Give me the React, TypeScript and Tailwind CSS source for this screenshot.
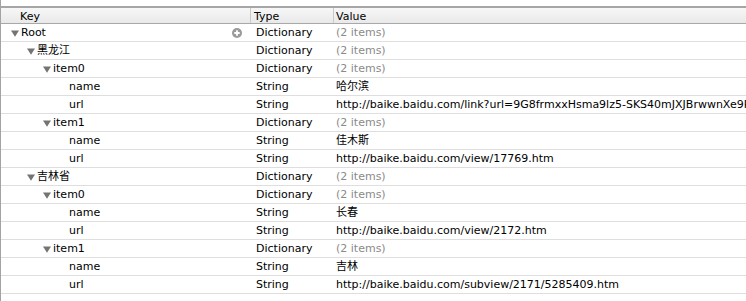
import React from "react";

type Row = {
    key: string;
    level: number;
    open?: boolean;
    type: string;
    value: string;
    muted?: boolean;
    plus?: boolean;
};

const rows: Row[] = [
    {key: "Root", level: 0, open: true, type: "Dictionary", value: "(2 items)", muted: true, plus: true},
    {key: "黑龙江", level: 1, open: true, type: "Dictionary", value: "(2 items)", muted: true},
    {key: "item0", level: 2, open: true, type: "Dictionary", value: "(2 items)", muted: true},
    {key: "name", level: 3, type: "String", value: "哈尔滨"},
    {key: "url", level: 3, type: "String", value: "http://baike.baidu.com/link?url=9G8frmxxHsma9lz5-SKS40mJXJBrwwnXe9RpqL"},
    {key: "item1", level: 2, open: true, type: "Dictionary", value: "(2 items)", muted: true},
    {key: "name", level: 3, type: "String", value: "佳木斯"},
    {key: "url", level: 3, type: "String", value: "http://baike.baidu.com/view/17769.htm"},
    {key: "吉林省", level: 1, open: true, type: "Dictionary", value: "(2 items)", muted: true},
    {key: "item0", level: 2, open: true, type: "Dictionary", value: "(2 items)", muted: true},
    {key: "name", level: 3, type: "String", value: "长春"},
    {key: "url", level: 3, type: "String", value: "http://baike.baidu.com/view/2172.htm"},
    {key: "item1", level: 2, open: true, type: "Dictionary", value: "(2 items)", muted: true},
    {key: "name", level: 3, type: "String", value: "吉林"},
    {key: "url", level: 3, type: "String", value: "http://baike.baidu.com/subview/2171/5285409.htm"},
];

const indents = ["pl-[10px]", "pl-[26px]", "pl-[42px]", "pl-[68px]"];

function Triangle() {
    return (
        <svg width="8" height="7" viewBox="0 0 8 7" className="mr-[2px] shrink-0">
            <path d="M0 0.5h8L4 6.8z" fill="#747474" />
        </svg>
    );
}

function PlusButton() {
    return (
        <svg width="10" height="10" viewBox="0 0 10 10" className="mr-[8px]">
            <circle cx="5" cy="5" r="5" fill="#9a9a9a" />
            <path d="M5 2.3v5.4M2.3 5h5.4" stroke="#fff" strokeWidth="1.8" />
        </svg>
    );
}

export default function App() {
    return (
        <div className="w-[746px] h-[301px] overflow-hidden bg-white border-l border-[#a3a3a3] text-[11px] text-black font-['DejaVu_Sans','Noto_Sans_CJK_SC',sans-serif]">
            <div className="h-[6px] bg-white" />
            <div className="border-t-2 border-[#a6a6a6] border-b border-b-[#a8a8a8] h-[18px] flex items-center bg-gradient-to-b from-[#f7f7f7] to-[#e9e9e9]">
                <div className="w-[249px] pl-[19px] pt-px leading-none">Key</div>
                <div className="w-[83px] h-full border-l border-[#c9c9c9] pl-[3px] pt-px flex items-center leading-none">Type</div>
                <div className="flex-1 h-full border-l border-[#c9c9c9] pl-[2px] pt-px flex items-center leading-none">Value</div>
            </div>
            {rows.map((r, i) => (
                <div key={i} className="h-[18px] pt-px border-b border-[#dedede] flex items-center whitespace-nowrap">
                    <div className={`w-[249px] flex items-center ${indents[r.level]}`}>
                        {r.open ? <Triangle /> : null}
                        <span className="flex-1">{r.key}</span>
                        {r.plus ? <PlusButton /> : null}
                    </div>
                    <div className="w-[84px] pl-[6px]">{r.type}</div>
                    <div className={`flex-1 pl-[2px] overflow-hidden ${r.muted ? "text-[#8a8a8a]" : ""}`}>{r.value}</div>
                </div>
            ))}
        </div>
    );
}
